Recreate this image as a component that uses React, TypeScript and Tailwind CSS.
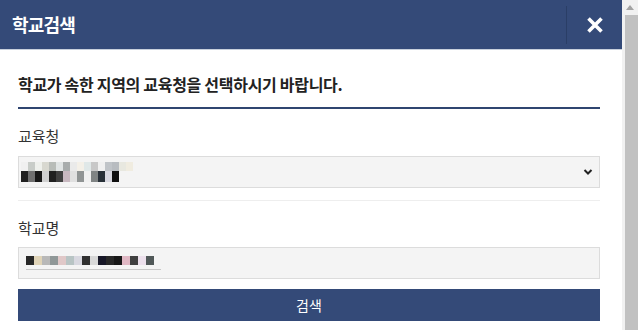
import React from "react";

const selRow1 = ["#f0f0f0","#c8ccc8","#eef0ec","#d8d8d0","#b8bcb8","#e0e4e4","#a8acac","#eaeaea","#f4f0e8","#e0e8e8","#c8c8c8","#f0f0f0","#c0c4c8","#b8bcc0","#e8e8e0","#f0ece0"];
const selRow2 = ["#202020","#707070","#181818","#d0d0d0","#202020","#404040","#c8b8c0","#e0e0e0","#909494","#f0f0f0","#808484","#283038","#d8d8e0","#101010","#f4f4f4","#f4f4f4"];
const inRow = ["#282828","#e0d4b8","#b8b8b8","#909898","#e0c8c8","#b8c4c4","#d8d8e0","#303030","#d8d8d8","#181828","#282828","#181818","#e0b8c4","#404040","#ece0ec","#505858"];

function Mosaic({ rows, cell, h }: { rows: string[][]; cell: number; h: number[] }) {
  return (
    <div className="flex flex-col">
      {rows.map((r, i) => (
        <div key={i} className="flex">
          {r.map((c, j) => (
            <div key={j} style={{ width: cell, height: h[i], background: c }} />
          ))}
        </div>
      ))}
    </div>
  );
}

export default function App() {
  return (
    <div
      className="flex w-[638px] h-[330px] overflow-hidden bg-white"
      style={{ fontFamily: '"Noto Sans CJK KR", "Noto Sans", sans-serif' }}
    >
      <div className="flex flex-col w-[622px]">
        <div className="flex h-[50px] items-center bg-[#344a78] border-b border-[#c8d0dc]">
          <div className="flex-1 pl-[12px] text-[18px] font-bold text-white tracking-[-0.8px]">학교검색</div>
          <div className="h-[38px] w-px bg-[#2a3e66]" />
          <div className="flex w-[55px] justify-center items-center">
            <svg width="18" height="18" viewBox="0 0 18 18">
              <path d="M2.5 2.5 L15.5 15.5 M15.5 2.5 L2.5 15.5" stroke="white" strokeWidth="3.6" strokeLinecap="butt" />
            </svg>
          </div>
        </div>
        <div className="flex flex-col px-[18px] pr-[22px]">
          <div className="pt-[24px] pb-[13px] border-b-2 border-[#2f4570] text-[16px] font-bold text-[#222] tracking-[-0.3px] leading-[20px]">
            학교가 속한 지역의 교육청을 선택하시기 바랍니다.
          </div>
          <div className="pt-[17px] text-[15px] text-[#333] leading-[20px]">교육청</div>
          <div className="mt-[10px] flex h-[32px] items-center justify-between bg-[#f4f4f4] border border-[#dcdcdc] pl-[2px] pr-[6px]">
            <Mosaic rows={[selRow1, selRow2]} cell={7} h={[9, 11]} />
            <svg width="10" height="8" viewBox="0 0 10 8">
              <path d="M1.5 2 L5 5.5 L8.5 2" stroke="#222" strokeWidth="2" fill="none" />
            </svg>
          </div>
          <div className="mt-[12px] border-t border-[#eeeeee]" />
          <div className="pt-[17px] text-[15px] text-[#333] leading-[20px]">학교명</div>
          <div className="mt-[9px] flex flex-col justify-center h-[32px] bg-[#f4f4f4] border border-[#dcdcdc] pl-[7px]">
            <Mosaic rows={[inRow]} cell={8} h={[9]} />
            <div className="mt-[4px] h-px w-[135px] bg-[#c8c8c8]" />
          </div>
          <div className="mt-[10px] flex h-[32px] items-center justify-center bg-[#344a78] text-[14px] text-white">검색</div>
        </div>
      </div>
      <div className="flex flex-col w-[16px] bg-[#f1f1f1] items-center">
        <div className="h-[15px] flex items-center justify-center">
          <svg width="8" height="5" viewBox="0 0 8 5"><path d="M0 5 L4 0 L8 5 Z" fill="#a3a3a3" /></svg>
        </div>
        <div className="flex-1 w-[13px] ml-[2px] bg-[#c1c1c1]" />
      </div>
    </div>
  );
}
